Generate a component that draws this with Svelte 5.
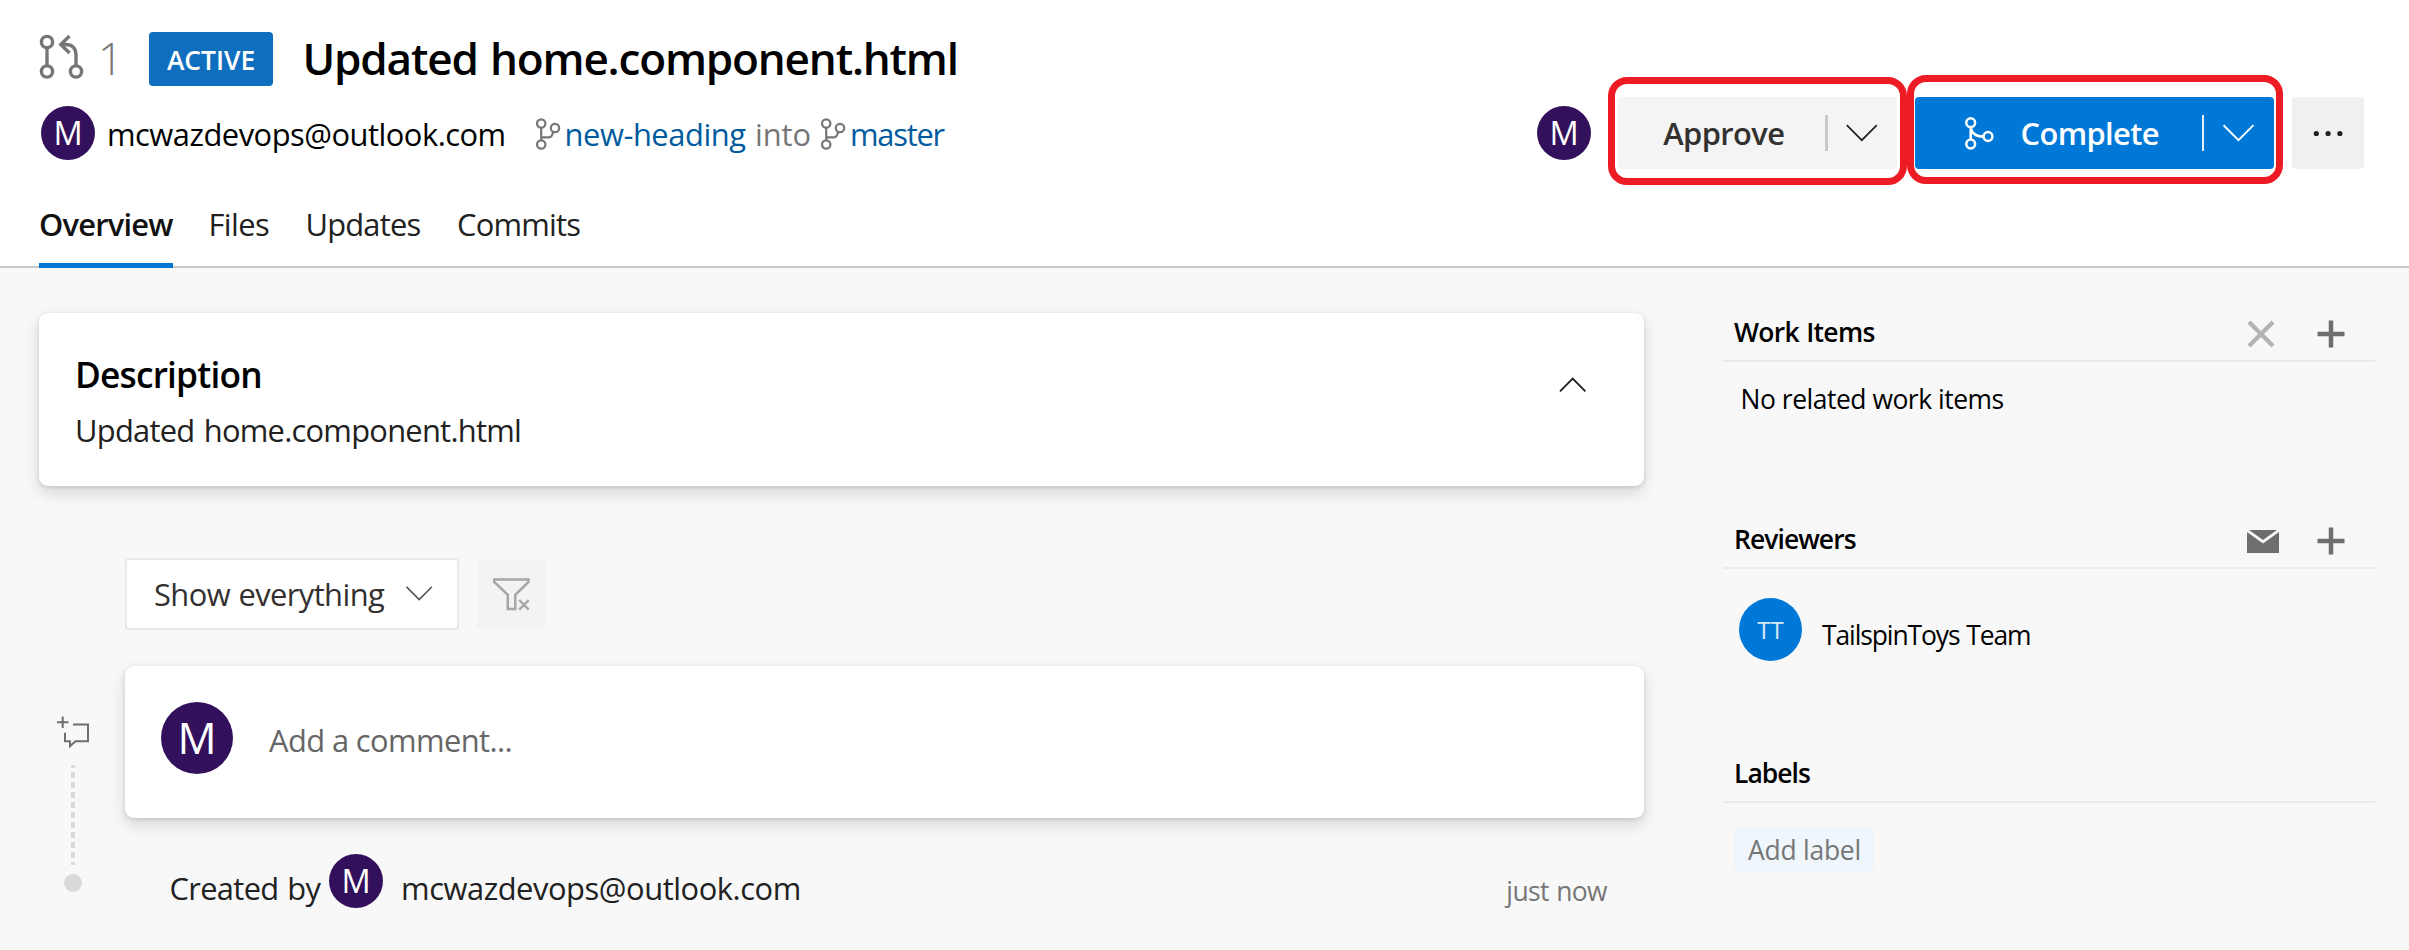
<script>
  const tabs = [
    { name: 'Files', cls: 'files' },
    { name: 'Updates', cls: 'updates' },
    { name: 'Commits', cls: 'commits' }
  ];
  const dots = [24.3, 36.1, 47.9];
</script>

{#snippet branch()}
  <svg class="branch" width="25" height="32" viewBox="0 0 25 32">
    <g fill="none" stroke="#767676" stroke-width="2.2">
      <circle cx="5.2" cy="5.5" r="4.2" />
      <circle cx="5.2" cy="26.5" r="4.2" />
      <circle cx="19" cy="10" r="4.2" />
      <path d="M5.200 9.700v12.600M5.200 19.300h8c1.300 0 2-.5 2.500-1.500l1.600-4" />
    </g>
  </svg>
{/snippet}

{#snippet plus()}
  <svg class="plus" width="28" height="28" viewBox="0 0 28 28">
    <path d="M14 .5v27M.5 14h27" fill="none" stroke="#6e6e6e" stroke-width="4.500" />
  </svg>
{/snippet}

<div class="page">
  <header>
    <div class="title-row">
      <svg width="45" height="46" viewBox="0 0 45 46">
        <g fill="none" stroke="#767676" stroke-width="3.400">
          <circle cx="8" cy="8" r="5.600" />
          <circle cx="8" cy="37.500" r="5.600" />
          <circle cx="37" cy="37.500" r="5.600" />
          <path d="M8 13.600v18.300M37 31.900V21c0-7-4-10.500-10-10.500h-5.500M30.500 2l-8.700 8.500 8.700 8.500" />
        </g>
      </svg>
      <span class="number">1</span>
      <span class="badge">ACTIVE</span>
      <h1>Updated home.component.html</h1>
    </div>

    <div class="meta-row">
      <span class="avatar">M</span>
      <span class="email">mcwazdevops@outlook.com</span>
      {@render branch()}
      <a class="source" href="#source">new-heading</a>
      <span class="into">into</span>
      {@render branch()}
      <a class="target" href="#target">master</a>

      <div class="actions">
        <span class="avatar">M</span>
        <div class="split approve">
          <span class="label">Approve</span>
          <i class="divider"></i>
          <svg width="32" height="18" viewBox="0 0 32 18"><path d="M.8 1.200l15 15 15-15" fill="none" stroke="#212121" stroke-width="1.700" /></svg>
        </div>
        <div class="split complete">
          <svg class="merge" width="29" height="33" viewBox="0 0 29 33">
            <g fill="none" stroke="#fff" stroke-width="2.500">
              <circle cx="5.700" cy="5.700" r="4.400" />
              <circle cx="5.700" cy="27" r="4.400" />
              <circle cx="23" cy="19.500" r="4.400" />
              <path d="M5.700 10.200v12.300M5.700 10.200c.8 5.500 5 9.300 12.800 9.300" />
            </g>
          </svg>
          <span class="label">Complete</span>
          <i class="divider"></i>
          <svg width="32" height="18" viewBox="0 0 32 18"><path d="M.5 1.200l15 15 15-15" fill="none" stroke="#fff" stroke-width="1.900" /></svg>
        </div>
        <div class="more">
          <svg width="72" height="72" viewBox="0 0 72 72">
            {#each dots as x}<circle cx={x} cy="36.500" r="2.600" fill="#212121" />{/each}
          </svg>
        </div>
      </div>
    </div>

    <nav>
      <span class="tab overview">Overview</span>
      {#each tabs as tab}
        <span class="tab {tab.cls}">{tab.name}</span>
      {/each}
    </nav>
  </header>

  <div class="body">
    <main>
      <section class="card description">
        <div>
          <h2>Description</h2>
          <p>Updated home.component.html</p>
        </div>
        <svg width="28" height="16" viewBox="0 0 28 16"><path d="M1 14.300l12.700-12.700 12.700 12.700" fill="none" stroke="#212121" stroke-width="1.900" /></svg>
      </section>

      <div class="filters">
        <div class="select">
          <span>Show everything</span>
          <svg width="27" height="16" viewBox="0 0 27 16"><path d="M.5 .8l12.700 12.700L25.900 .8" fill="none" stroke="#555" stroke-width="1.600" /></svg>
        </div>
        <div class="clear">
          <svg width="37" height="33" viewBox="0 0 37 33">
            <g fill="none" stroke="#a6a6a6" stroke-width="2.500">
              <path d="M1.200 1.500h34.300v2.500L22.300 16.800v14.300h-7.500V16.800L1.200 4z" />
              <path d="M26.200 22l9.500 9.700M35.700 22l-9.500 9.700" />
            </g>
          </svg>
        </div>
      </div>

      <div class="timeline">
        <div class="rail">
          <svg width="33" height="31" viewBox="0 0 33 31">
            <g fill="none" stroke="#6e6e6e" stroke-width="2">
              <path d="M5.700 -.5v11.500M0 5.300h11.500M16 7.500h15v16.700H18.500l-5.500 5v-5H8v-8.500" />
            </g>
          </svg>
          <svg class="dash" width="4" height="100" viewBox="0 0 4 100"><path d="M2 0v100" stroke="#d9d9d9" stroke-width="4" stroke-dasharray="6 4" stroke-dashoffset="3" /></svg>
          <i class="dot"></i>
        </div>
        <div class="events">
          <section class="card comment">
            <span class="avatar large">M</span>
            <span class="placeholder">Add a comment...</span>
          </section>
          <div class="created">
            <span class="by">Created by</span>
            <span class="avatar">M</span>
            <span class="author">mcwazdevops@outlook.com</span>
            <span class="when">just now</span>
          </div>
        </div>
      </div>
    </main>

    <aside>
      <section class="work">
        <div class="head">
          <h3 class="work-title">Work Items</h3>
          <svg class="remove" width="28" height="28" viewBox="0 0 28 28"><path d="M2 2l24 24M26 2L2 26" fill="none" stroke="#b3b3b3" stroke-width="4.300" /></svg>
          {@render plus()}
        </div>
        <p class="none">No related work items</p>
      </section>

      <section class="reviewers">
        <div class="head">
          <h3 class="rev-title">Reviewers</h3>
          <svg class="mail" width="32" height="23" viewBox="0 0 32 23">
            <path d="M2 0h28L16 10z" fill="#6e6e6e" />
            <path d="M0 2l16 11.500L32 2v21H0z" fill="#6e6e6e" />
          </svg>
          {@render plus()}
        </div>
        <div class="person">
          <span class="avatar team">TT</span>
          <span class="team-name">TailspinToys Team</span>
        </div>
      </section>

      <section class="labels">
        <div class="head"><h3 class="labels-title">Labels</h3></div>
        <span class="add-label">Add label</span>
      </section>
    </aside>
  </div>
</div>

<style>
  :global(body) { margin: 0; background: #f8f8f8; }
  .page {
    width: 2409px; height: 950px; overflow: hidden; background: #f8f8f8; color: #000;
    font-family: "Open Sans", "Noto Sans", sans-serif; font-size: 30.87px; line-height: 44px;
  }
  .page * { box-sizing: border-box; }
  span, h1, h2, h3, p, a { margin: 0; white-space: nowrap; flex: none; }
  svg { display: block; flex: none; }
  a { color: #005a9e; text-decoration: none; }

  header {
    height: 268px; padding: 28px 45px 0 39px; background: #fff;
    box-shadow: inset 0 -2px #c8c8c8; display: flex; flex-direction: column;
  }
  .title-row { height: 60px; display: flex; align-items: center; font-size: 44.1px; line-height: 60px; }
  .title-row svg { margin-top: -3px; }
  .number { margin-left: 14px; width: 51px; color: #767676; font-weight: 350; }
  .badge {
    width: 124px; height: 54px; margin-top: 2px; border-radius: 4px; background: #106ebe; color: #fff;
    font-size: 26.46px; font-weight: 600; line-height: 56px; text-align: center; letter-spacing: -0.05px;
  }
  h1 { margin-left: 29.5px; font-size: 44.1px; line-height: 60px; font-weight: 600; letter-spacing: -1.19px; word-spacing: 2px; }

  .meta-row { height: 72px; margin-top: 9px; display: flex; align-items: center; padding-left: 2px; }
  .avatar {
    width: 54px; height: 54px; border-radius: 50%; background: #32105c; color: #fff;
    font-size: 32.500px; line-height: 54px; text-align: center; font-weight: 400;
  }
  .email { margin-left: 12px; width: 429px; padding-top: 2px; letter-spacing: -0.49px; }
  .branch { margin-top: 2px; }
  .source { margin-left: 3.500px; width: 190.500px; padding-top: 2px; letter-spacing: -0.43px; }
  .into { width: 66px; padding-top: 2px; color: #767676; letter-spacing: -0.1px; }
  .target { margin-left: 4px; padding-top: 2px; letter-spacing: -1.25px; }

  .actions { margin-left: auto; display: flex; align-items: center; }
  .split { position: relative; height: 72px; border-radius: 4px; display: flex; align-items: center; font-weight: 600; }
  .split::after { content: ""; position: absolute; border: 7px solid #ed1c24; border-radius: 19px; }
  .approve { width: 279px; margin-left: 27px; padding-left: 45.2px; background: #f4f4f4; color: #323130; }
  .approve::after { inset: -20px -9.500px -16px -10px; }
  .approve .label { width: 161.8px; letter-spacing: -0.58px; }
  .approve .divider { width: 3px; height: 36px; background: #c8c8c8; margin-right: 18px; }
  .complete { width: 359px; margin-left: 18px; padding-left: 49.500px; background: #0078d7; color: #fff; }
  .complete::after { inset: -22px -9px -15px -8px; }
  .complete .label { margin-left: 27px; width: 181.500px; letter-spacing: -0.62px; }
  .complete .divider { width: 2px; height: 36px; background: #e6f1fb; margin-right: 19px; }
  .more { width: 72px; height: 72px; margin-left: 18px; border-radius: 4px; background: #f0f0f0; }

  nav { height: 89px; margin-top: 10px; display: flex; line-height: 91px; color: #212121; }
  .tab { height: 89px; }
  .overview { width: 134px; font-weight: 600; letter-spacing: -0.78px; color: #111; border-bottom: 5px solid #0078d7; }
  .files { margin-left: 35.5px; width: 97px; letter-spacing: -0.6px; }
  .updates { width: 151.5px; letter-spacing: -0.8px; }
  .commits { letter-spacing: -0.78px; }

  .body { display: flex; height: 682px; }
  main { width: 1644px; padding: 45px 0 0 39px; }
  .card { background: #fff; border-radius: 9px; box-shadow: 0 7px 16px rgba(0, 0, 0, .14), 0 1px 4px rgba(0, 0, 0, .12); }
  .description { height: 173px; padding: 36px 57px 0 36px; display: flex; justify-content: space-between; }
  .description svg { margin-top: 28px; }
  h2 { font-size: 35.28px; line-height: 51px; font-weight: 600; letter-spacing: -0.8px; }
  .description p { margin-top: 8px; letter-spacing: -0.74px; word-spacing: 2px; color: #212121; }

  .filters { display: flex; align-items: center; margin: 72px 0 36px 86px; }
  .select {
    width: 334px; height: 72px; padding-left: 27px; display: flex; align-items: center;
    background: #fff; border: 2px solid #eaeaea; border-radius: 4px; color: #323130;
  }
  .select span { width: 252px; letter-spacing: -0.58px; word-spacing: 1px; }
  .clear { width: 68px; height: 68px; margin-left: 18px; background: #f3f3f3; display: flex; align-items: center; justify-content: center; }

  .timeline { display: flex; }
  .rail { width: 86px; padding: 51px 0 0 18px; }
  .rail svg { overflow: visible; }
  .dash { margin: 17px 0 9px 14px; }
  .dot { display: block; width: 18px; height: 18px; margin-left: 7px; border-radius: 50%; background: #d9d9d9; }
  .events { flex: 1; }
  .comment { height: 152px; padding: 36px; display: flex; }
  .large { width: 72px; height: 72px; font-size: 43.500px; line-height: 72px; }
  .placeholder { margin: 16px 0 0 36px; color: #666; letter-spacing: -0.6px; }
  .created { height: 54px; margin-top: 36px; padding-left: 44.5px; display: flex; color: #212121; }
  .by { width: 159.5px; padding-top: 12px; letter-spacing: -0.68px; word-spacing: 1.500px; }
  .author { margin-left: 18px; padding-top: 12px; letter-spacing: -0.44px; }
  .when { margin: 15px 37px 0 auto; font-size: 26.46px; color: #767676; letter-spacing: -0.6px; word-spacing: 1px; }

  aside { width: 652px; margin-left: 79px; padding-top: 34px; font-size: 26.46px; }
  .head { height: 60px; border-bottom: 2px solid #eaeaea; padding: 0 30px 0 11px; display: flex; align-items: center; }
  h3 { font-size: 26.46px; line-height: 44px; font-weight: 600; padding-top: 1.400px; margin-right: auto; }
  .work-title { letter-spacing: -0.68px; word-spacing: 1px; }
  .rev-title { letter-spacing: -0.93px; }
  .labels-title { letter-spacing: -0.96px; }
  .head svg { margin-top: 6.500px; }
  .remove { margin-right: 42px; }
  .mail { margin-right: 38px; }
  .work { height: 207px; }
  .reviewers { height: 234px; }
  .none { margin: 15px 0 0 17.600px; letter-spacing: -0.48px; }
  .person { display: flex; padding: 29px 0 0 16px; }
  .team { width: 63px; height: 63px; background: #0078d7; color: #d5e9fa; font-size: 24px; line-height: 64px; }
  .team-name { margin: 15px 0 0 20px; letter-spacing: -1.1px; word-spacing: 1px; }
  .add-label {
    display: block; width: 140px; height: 45px; margin: 23px 0 0 11px; padding-left: 14px;
    background: #eff6fc; color: #767676; line-height: 48.500px; letter-spacing: -0.24px;
  }
</style>
